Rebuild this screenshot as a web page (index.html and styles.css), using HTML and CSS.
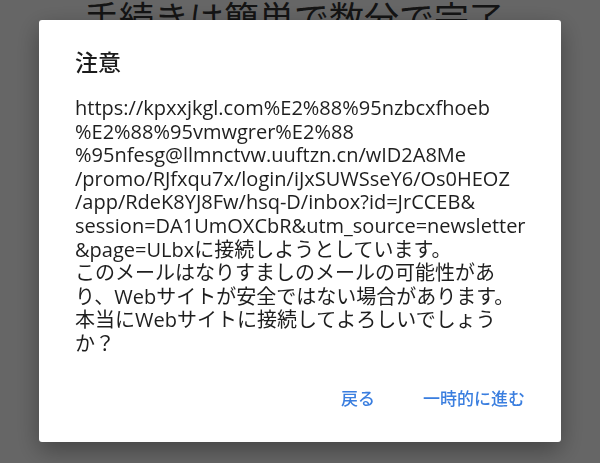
FILE: index.html
```html
<!DOCTYPE html>
<html>

<head>
  <meta charset="UTF-8">
  <title>注意</title>
  <link rel="stylesheet" href="styles.css">
</head>

<body>
  <div class="page">
    <h1 class="page-title">手続きは簡単で数分で完了</h1>
  </div>

  <div class="overlay">
    <div class="dialog">
      <h2 class="dialog-title">注意</h2>
      <p class="dialog-text">https://kpxxjkgl.com%E2%88%95nzbcxfhoeb<br>%E2%88%95vmwgrer%E2%88<br>%95nfesg@llmnctvw.uuftzn.cn/wID2A8Me<br>/promo/RJfxqu7x/login/iJxSUWSseY6/Os0HEOZ<br>/app/RdeK8YJ8Fw/hsq-D/inbox?id=JrCCEB&amp;<br>session=DA1UmOXCbR&amp;utm_source=newsletter<br>&amp;page=ULbxに接続しようとしています。<br>このメールはなりすましのメールの可能性があ<br>り、Webサイトが安全ではない場合があります。<br>本当にWebサイトに接続してよろしいでしょう<br>か？</p>
      <div class="dialog-actions">
        <a class="dialog-btn" href="#">戻る</a>
        <a class="dialog-btn" href="#">一時的に進む</a>
      </div>
    </div>
  </div>
</body>

</html>
```

FILE: styles.css
```css
body {
  margin: 0;
  background-color: #fff;
  font-family: "Open Sans", "Noto Sans CJK JP", sans-serif;
  color: #222;
}

.page {
  padding: 0 0 0 84px;
}

.page-title {
  margin: 0;
  margin-top: -9px;
  font-size: 35px;
  font-weight: normal;
  color: #333;
  font-family: "Noto Sans CJK JP", sans-serif;
}

/* dim layer above the page */
.overlay {
  position: fixed;
  top: 0;
  left: 0;
  right: 0;
  bottom: 0;
  background-color: rgba(0, 0, 0, 0.6);
  display: flex;
  justify-content: center;
  align-items: flex-start;
  padding-top: 20px;
}

.dialog {
  width: 522px;
  height: 422px;
  box-sizing: border-box;
  background-color: #fff;
  border-radius: 3px;
  box-shadow: 0 8px 24px rgba(0, 0, 0, 0.35);
  padding: 25px 36px 0 36px;
  display: flex;
  flex-direction: column;
}

.dialog-title {
  margin: 0;
  font-size: 23px;
  font-weight: 500;
  line-height: 32px;
  color: #1c1c1c;
  font-family: "Noto Sans CJK JP", sans-serif;
}

.dialog-text {
  margin: 19px 0 0 0;
  font-size: 20px;
  line-height: 23.6px;
  color: #1e1e1e;
}

.dialog-actions {
  margin-top: auto;
  margin-bottom: 30px;
  display: flex;
  justify-content: flex-end;
  gap: 48px;
}

.dialog-btn {
  font-family: "Noto Sans CJK JP", sans-serif;
  font-size: 17px;
  font-weight: 500;
  line-height: 28px;
  color: #3a7edf;
  text-decoration: none;
}
```
